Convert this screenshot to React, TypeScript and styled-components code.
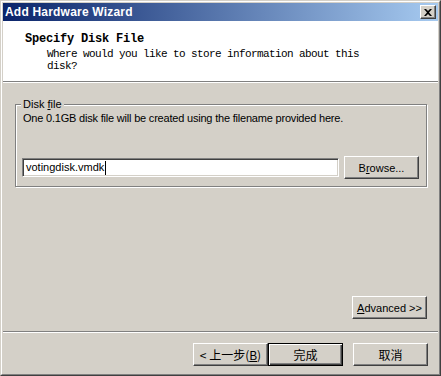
import React from "react";
import styled, { createGlobalStyle } from "styled-components";

const Global = createGlobalStyle`
  html, body { margin: 0; padding: 0; background: #d4d0c8; }
  body { font-family: "Liberation Sans", Arial, sans-serif; font-size: 11px; color: #000; }
  * { box-sizing: border-box; }
`;

const UI = `"Liberation Sans", Arial, "Noto Sans CJK SC", sans-serif`;

const Window = styled.div`
  width: 441px;
  height: 376px;
  border: 1px solid;
  border-color: #d4d0c8 #404040 #404040 #d4d0c8;
  background: #d4d0c8;
`;

const Frame = styled.div`
  height: 100%;
  border: 1px solid;
  border-color: #ffffff #808080 #808080 #ffffff;
  padding: 1px;
  display: flex;
  flex-direction: column;
`;

const TitleBar = styled.div`
  height: 18px;
  flex: none;
  display: flex;
  align-items: center;
  padding: 0 2px 0 2px;
  background: linear-gradient(to right, #0a246a, #a6caf0);
  color: #fff;
  font: bold 12px ${UI};
`;

const TitleText = styled.span`
  flex: 1;
  letter-spacing: 0.2px;
`;

const CloseBtn = styled.div`
  width: 16px;
  height: 14px;
  background: #d4d0c8;
  border: 1px solid;
  border-color: #ffffff #404040 #404040 #ffffff;
  box-shadow: inset -1px -1px 0 #808080;
  display: flex;
  align-items: center;
  justify-content: center;
`;

const Header = styled.div`
  height: 61px;
  flex: none;
  background: #fff;
  border-bottom: 1px solid #808080;
  box-shadow: 0 1px 0 #fff;
  padding: 11px 0 0 22px;
  font-family: "Liberation Mono", "Courier New", monospace;
`;

const HeaderTitle = styled.div`
  font-size: 12px;
  font-weight: bold;
  letter-spacing: -0.2px;
  line-height: 14px;
`;

const HeaderSub = styled.div`
  font-size: 11px;
  letter-spacing: -0.6px;
  line-height: 12px;
  margin: 2px 0 0 22px;
  width: 330px;
`;

const Content = styled.div`
  flex: 1;
  margin-top: 1px;
  padding: 15px 12px 0 12px;
  display: flex;
  flex-direction: column;
  border-bottom: 1px solid #808080;
`;

const Group = styled.fieldset`
  margin: 0;
  padding: 0 7px 9px 7px;
  height: 89px;
  border: 1px solid #808080;
  box-shadow: inset 1px 1px 0 #fff, 1px 1px 0 #fff;
  font-family: ${UI};
  font-size: 11px;
`;

const Legend = styled.legend`
  padding: 0 2px 0 2px;
  margin-left: -2px;
  background: #d4d0c8;
  line-height: 13px;
`;

const Desc = styled.div`
  line-height: 13px;
  margin-top: 1px;
  letter-spacing: -0.2px;
`;

const FileRow = styled.div`
  display: flex;
  align-items: center;
  margin-top: 31px;
  margin-left: -1px;
`;

const TextBox = styled.div`
  width: 317px;
  height: 19px;
  background: #fff;
  border: 1px solid;
  border-color: #808080 #ffffff #ffffff #808080;
  box-shadow: inset 1px 1px 0 #404040, inset -1px -1px 0 #d4d0c8;
  padding: 2px 3px;
  display: flex;
  align-items: center;
  font-size: 11px;
  line-height: 13px;
`;

const Caret = styled.span`
  width: 1px;
  height: 14px;
  background: #000;
  margin-left: 1px;
`;

const Button = styled.div<{ $default?: boolean }>`
  width: 75px;
  height: 23px;
  flex: none;
  background: #d4d0c8;
  border: 1px solid;
  border-color: ${(p) => (p.$default ? "#000" : "#ffffff #404040 #404040 #ffffff")};
  box-shadow: ${(p) =>
    p.$default
      ? "inset 1px 1px 0 #fff, inset -1px -1px 0 #404040, inset -2px -2px 0 #808080"
      : "inset -1px -1px 0 #808080"};
  display: flex;
  align-items: center;
  justify-content: center;
  font-family: ${UI};
  font-size: 11px;
  color: #000;
`;

const BrowseButton = styled(Button)`
  margin-left: 5px;
`;

const U = styled.span`
  text-decoration: underline;
`;

const AdvancedRow = styled.div`
  display: flex;
  justify-content: flex-end;
  margin-top: 109px;
  margin-right: -1px;
`;

const Footer = styled.div`
  height: 41px;
  flex: none;
  border-top: 1px solid #fff;
  display: flex;
  padding: 10px 10px 0 190px;
`;

const CjkLabel = styled.span`
  font-family: "Noto Sans CJK SC", "Liberation Sans", sans-serif;
  font-size: 12px;
`;

const CancelButton = styled(Button)`
  margin-left: 10px;
`;

export default function App() {
  return (
    <>
      <Global />
      <Window>
        <Frame>
          <TitleBar>
            <TitleText>Add Hardware Wizard</TitleText>
            <CloseBtn>
              <svg width="8" height="7" viewBox="0 0 8 7">
                <path d="M0 0h2l2 2 2-2h2L5 3.5 8 7H6L4 5 2 7H0l3-3.5z" fill="#000" />
              </svg>
            </CloseBtn>
          </TitleBar>
          <Header>
            <HeaderTitle>Specify Disk File</HeaderTitle>
            <HeaderSub>Where would you like to store information about this disk?</HeaderSub>
          </Header>
          <Content>
            <Group>
              <Legend>
                Disk <U>f</U>ile
              </Legend>
              <Desc>One 0.1GB disk file will be created using the filename provided here.</Desc>
              <FileRow>
                <TextBox>
                  votingdisk.vmdk
                  <Caret />
                </TextBox>
                <BrowseButton>
                  B<U>r</U>owse...
                </BrowseButton>
              </FileRow>
            </Group>
            <AdvancedRow>
              <Button>
                <U>A</U>dvanced &gt;&gt;
              </Button>
            </AdvancedRow>
          </Content>
          <Footer>
            <Button>
              <CjkLabel>
                &lt; 上一步(<U>B</U>)
              </CjkLabel>
            </Button>
            <Button $default>
              <CjkLabel>完成</CjkLabel>
            </Button>
            <CancelButton>
              <CjkLabel>取消</CjkLabel>
            </CancelButton>
          </Footer>
        </Frame>
      </Window>
    </>
  );
}
